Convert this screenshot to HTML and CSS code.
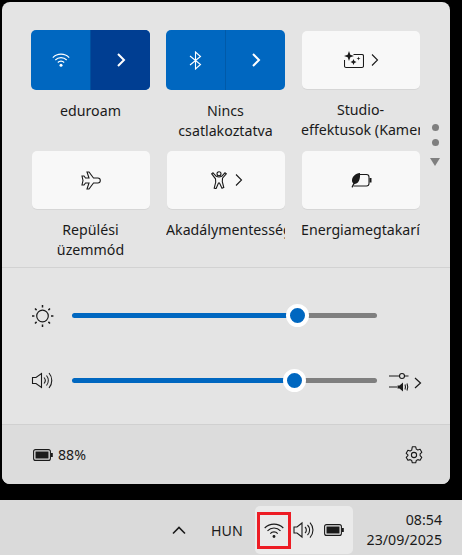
FILE: index.html
```html
<!DOCTYPE html>
<html lang="hu">
<head>
<meta charset="utf-8">
<title>Gyorsbeállítások</title>
<link rel="stylesheet" href="styles.css">
</head>
<body>
<main class="panel">
  <section class="tiles">
    <div class="grid">
      <div class="cell">
        <div class="split">
          <span class="part"><svg width="18" height="14" viewBox="0 0 18 14" fill="none" stroke="#fff" stroke-width="1.100"><path d="M.8 4.600a11.500 11.500 0 0 1 16.400 0M3.300 7a8 8 0 0 1 11.400 0M5.800 9.500a4.400 4.400 0 0 1 6.400 0"/><circle cx="9" cy="12.300" r="1.500" fill="#fff" stroke="none"/></svg></span>
          <span class="part alt"><svg width="12" height="14" viewBox="0 0 12 14" fill="none" stroke="#fff" stroke-width="2"><path d="M3 1 9 7l-6 6"/></svg></span>
        </div>
        <div class="label">eduroam</div>
      </div>
      <div class="cell">
        <div class="split">
          <span class="part"><svg width="13" height="19" viewBox="0 0 13 19" fill="none" stroke="#fff" stroke-width="1.100"><path d="M1 5 11.500 13.500 6.500 18V1l5 4.500L1 14"/></svg></span>
          <span class="part line"><svg width="12" height="14" viewBox="0 0 12 14" fill="none" stroke="#fff" stroke-width="2"><path d="M3 1 9 7l-6 6"/></svg></span>
        </div>
        <div class="label">Nincs<br>csatlakoztatva</div>
      </div>
      <div class="cell">
        <div class="tile">
          <svg width="20" height="18" viewBox="0 0 20 18" fill="none" stroke="#1a1a1a" stroke-width="1.100"><path d="M9.500 3.500h8.500q1.500 0 1.500 1.500v10q0 1.500-1.500 1.500H2q-1.500 0-1.500-1.500V9"/><path d="M5 0 6.300 3.700 10 5 6.300 6.300 5 10 3.700 6.300 0 5l3.700-1.300z" fill="#1a1a1a" stroke="none"/><path d="M9.500 8l.9 2.100 2.100.9-2.100.9-.9 2.100-.9-2.100-2.100-.9 2.100-.9zM14.500 5.500l.5 1.500 1.500.5-1.500.5-.5 1.500-.5-1.500-1.500-.5 1.500-.5z" fill="#1a1a1a" stroke="none"/></svg>
          <svg width="8" height="12" viewBox="0 0 8 12" fill="none" stroke="#1a1a1a" stroke-width="1.100"><path d="M1 .5 6.500 6 1 11.500"/></svg>
        </div>
        <div class="label">Studio-<br>effektusok (Kamera)</div>
      </div>
      <div class="cell">
        <div class="tile">
          <svg width="20" height="19" viewBox="0 0 20 19" fill="none" stroke="#1a1a1a" stroke-width="1.100"><path d="M6 1h2l4.500 6h4.300q2.500 0 2.500 2.500T16.800 12h-4.300L8 18H6l2-6H4.500L3 14H1l1-4.500L1 5h2l1.500 2H8z"/></svg>
        </div>
        <div class="label">Repülési<br>üzemmód</div>
      </div>
      <div class="cell">
        <div class="tile">
          <svg width="18" height="18" viewBox="0 0 18 18" fill="none" stroke="#1a1a1a" stroke-width="1.100"><circle cx="9" cy="2.800" r="2"/><path d="M3 1.800 6.300 5.300q2.700 1.400 5.400 0L15 1.800l1.300 1-3.800 4.400-.2 3.500 1.500 5.800-1.800.7L9.500 12h-1l-2.500 5.800-1.800-.7 1.500-5.800-.2-3.500L1.700 2.800z"/></svg>
          <svg width="8" height="12" viewBox="0 0 8 12" fill="none" stroke="#1a1a1a" stroke-width="1.100"><path d="M1 .5 6.500 6 1 11.500"/></svg>
        </div>
        <div class="label">Akadálymentesség</div>
      </div>
      <div class="cell">
        <div class="tile">
          <svg width="21" height="15" viewBox="0 0 21 15" fill="none" stroke="#1a1a1a" stroke-width="1.100"><path d="M7.500 1.500h8q2.500 0 2.500 2.500v6.500q0 2.500-2.500 2.500H2.500"/><path d="M18.500 5H20.500v4.500h-2z" fill="#1a1a1a" stroke="none"/><path d="M9 0C4.500.5 1 3.500 1 7.500c0 1.300.5 2.300 1.300 2.800L.5 14l1 .8L3.500 11C7 11 9.500 7.500 9 0z" fill="#1a1a1a" stroke="none"/></svg>
        </div>
        <div class="label">Energiamegtakarítás</div>
      </div>
    </div>
    <div class="pager">
      <i class="dot"></i><i class="dot"></i>
      <svg class="tri" width="10" height="8" viewBox="0 0 10 8"><path d="M0 0h10L5 8z" fill="#7f7f7f"/></svg>
    </div>
  </section>
  <section class="sliders">
    <div class="row">
      <svg class="rowicon" width="23" height="23" viewBox="0 0 23 23" fill="none" stroke="#1a1a1a" stroke-width="1.200"><circle cx="11.500" cy="12" r="5.800"/><path d="M11.500 1v2.400M11.500 20.600V23M1 12h2.400M20 12h2.400M4 4.500l1.600 1.600M17.400 17.900 19 19.500M4 19.500l1.600-1.600M17.400 6.100 19 4.500" stroke-width="1.500"/></svg>
      <div class="track"><div class="fill" style="width:225px"></div><span class="thumb"></span><div class="rest"></div></div>
    </div>
    <div class="row">
      <svg class="rowicon icon-vol" width="23" height="19" viewBox="0 0 23 19" fill="none" stroke="#1a1a1a" stroke-width="1.100"><path d="M1.500 6.500h3.500L10.500 2.500v14L5 12.500H1.500z"/><path d="M13 6.500a4.500 4.500 0 0 1 0 6M15.500 4.500a8 8 0 0 1 0 10M18 2a11.500 11.500 0 0 1 0 15"/></svg>
      <div class="track"><div class="fill" style="width:222px"></div><span class="thumb"></span><div class="rest"></div></div>
      <svg class="mixer" width="36" height="24" viewBox="0 0 36 24" fill="none" stroke="#1a1a1a" stroke-width="1.100"><path d="M1 7h10M16.500 7h4"/><circle cx="14" cy="7" r="2.500"/><path d="M1 18h8"/><path d="M9.500 16.500h2l3.500-3v9l-3.500-3h-2z" fill="#1a1a1a" stroke="none"/><path d="M17 15.500q1 2.500 0 5M19 14.500q1.500 3.500 0 7"/><path d="M27 9l5.500 5-5.500 5" stroke-width="1.200"/></svg>
    </div>
  </section>
  <footer class="foot">
    <div class="batt">
      <svg width="20" height="12" viewBox="0 0 20 12" fill="none" stroke="#1a1a1a" stroke-width="1.100"><rect x=".6" y=".6" width="16.800" height="10.800" rx="2"/><rect x="2.500" y="2.500" width="13" height="7" fill="#1a1a1a" stroke="none"/><rect x="18" y="4" width="1.800" height="4" fill="#1a1a1a" stroke="none"/></svg>
      <span>88%</span>
    </div>
    <svg width="20" height="20" viewBox="0 0 20 20" fill="none" stroke="#1a1a1a" stroke-width="1.100"><circle cx="10" cy="10" r="2.600"/><path d="M8.300 1.800h3.400l.6 2.300 1.500.9 2.300-.7 1.700 3-1.700 1.600v1.800l1.700 1.600-1.700 3-2.300-.7-1.500.9-.6 2.300H8.300l-.6-2.300-1.500-.9-2.300.7-1.700-3 1.700-1.600V9.900L2.200 8.300l1.700-3 2.300.7 1.500-.9z" stroke-linejoin="round"/></svg>
  </footer>
</main>
<div class="taskbar">
  <svg class="caret" width="14" height="9" viewBox="0 0 14 9" fill="none" stroke="#1a1a1a" stroke-width="1.600"><path d="M1 7.500 7 1.500l6 6"/></svg>
  <span class="lang">HUN</span>
  <div class="tray">
    <span class="wifi"><svg width="20" height="15" viewBox="0 0 20 15" fill="none" stroke="#1a1a1a" stroke-width="1.200"><path d="M.7 5a13 13 0 0 1 18.600 0M3.500 7.800a9 9 0 0 1 13 0M6.300 10.600a5 5 0 0 1 7.400 0"/><circle cx="10" cy="13.500" r="1.400" fill="#1a1a1a" stroke="none"/></svg></span>
    <svg width="22" height="18" viewBox="0 0 22 18" fill="none" stroke="#1a1a1a" stroke-width="1.100"><path d="M1 6h3l5-4v14l-5-4H1z"/><path d="M12 6a4 4 0 0 1 0 6M14.500 4a7 7 0 0 1 0 10M17 1.500a11 11 0 0 1 0 15"/></svg>
    <svg class="bat2" width="20" height="12" viewBox="0 0 20 12" fill="none" stroke="#1a1a1a" stroke-width="1.100"><rect x=".6" y=".6" width="16.800" height="10.800" rx="2"/><rect x="2.500" y="2.500" width="13" height="7" fill="#1a1a1a" stroke="none"/><rect x="18" y="4" width="1.800" height="4" fill="#1a1a1a" stroke="none"/></svg>
  </div>
  <div class="clock"><div>08:54</div><div>23/09/2025</div></div>
</div>
</body>
</html>
```

FILE: styles.css
```css
* { box-sizing: border-box; }
html, body { margin: 0; padding: 0; }
body {
  width: 462px;
  height: 555px;
  overflow: hidden;
  background: #000;
  font-family: "Noto Sans", "Open Sans", sans-serif;
  font-size: 14.200px;
  color: #1a1a1a;
  display: flex;
  flex-direction: column;
}
.panel {
  margin: 2px 0 0 2px;
  width: 448px;
  height: 482px;
  border-radius: 8px;
  background: #e4e4e4;
  overflow: hidden;
  display: flex;
  flex-direction: column;
}
.tiles {
  height: 266px;
  padding: 28px 0 0 29px;
  display: flex;
  border-bottom: 1px solid #d2d2d2;
}
.grid {
  width: 389px;
  display: grid;
  grid-template-columns: repeat(3, 119px);
  grid-auto-rows: 120px;
  column-gap: 16px;
}
.cell { min-width: 0; }
.split {
  height: 60px;
  display: flex;
  border-radius: 5px;
  overflow: hidden;
  background: #0067c0;
}
.part {
  flex: 1;
  display: flex;
  align-items: center;
  justify-content: center;
}
.part.alt { background: #003e92; border-left: 1px solid #00509f; }
.part.line { border-left: 1px solid #005aa9; }
.tile {
  height: 58px;
  margin: 1px 0 1px 1px;
  border-radius: 5px;
  background: #f8f8f8;
  box-shadow: 0 1px 0 #d6d6d6;
  display: flex;
  align-items: center;
  justify-content: center;
  gap: 7px;
}
.label {
  margin-top: 11px;
  line-height: 20px;
  text-align: center;
  white-space: nowrap;
  overflow: hidden;
  color: #1a1a1a;
}
.pager {
  margin-left: 10px;
  padding-top: 94px;
  width: 10px;
  display: flex;
  flex-direction: column;
  align-items: center;
}
.dot {
  width: 7px;
  height: 7px;
  border-radius: 50%;
  background: #7f7f7f;
  margin-bottom: 8px;
}
.tri { margin-top: 4px; flex: none; }
.sliders { height: 156px; padding-top: 35px; }
.row {
  height: 25px;
  margin-bottom: 40px;
  padding-left: 29px;
  display: flex;
  align-items: center;
}
.rowicon { flex: none; }
.track {
  margin-left: 18px;
  width: 305px;
  flex: none;
  display: flex;
  align-items: center;
}
.icon-vol + .track { margin-left: 18px; }
.fill { height: 5px; background: #0067c0; border-radius: 3px 0 0 3px; margin-right: -11px; }
.rest { flex: 1; height: 5px; background: #7f7f7f; border-radius: 0 3px 3px 0; margin-left: -11px; }
.thumb {
  width: 23px;
  height: 23px;
  flex: none;
  border-radius: 50%;
  background: #0067c0;
  border: 4.500px solid #fff;
  position: relative;
  z-index: 1;
}
.mixer { margin-left: 11px; flex: none; }
.foot {
  flex: 1;
  background: #dcdcdc;
  border-top: 1px solid #d0d0d0;
  padding: 0 26px 0 31px;
  display: flex;
  align-items: center;
  justify-content: space-between;
}
.batt { display: flex; align-items: center; gap: 5px; }
.taskbar {
  margin-top: 16px;
  height: 55px;
  flex: none;
  background: #dadada;
  display: flex;
  align-items: center;
  padding: 5px 0 0 172px;
}
.caret { flex: none; }
.lang { margin-left: 25px; width: 44px; }
.tray {
  width: 98px;
  height: 48px;
  background: #eaeaea;
  border-radius: 5px;
  display: flex;
  align-items: center;
}
.wifi {
  margin-left: 2px;
  width: 34px;
  height: 37px;
  border: 3px solid #ed1c24;
  display: flex;
  align-items: center;
  justify-content: center;
}
.tray > svg { margin-left: 2px; }
.tray > .bat2 { margin-left: 9px; }
.clock {
  margin-left: auto;
  padding-right: 20px;
  text-align: right;
  line-height: 20px;
}
```
